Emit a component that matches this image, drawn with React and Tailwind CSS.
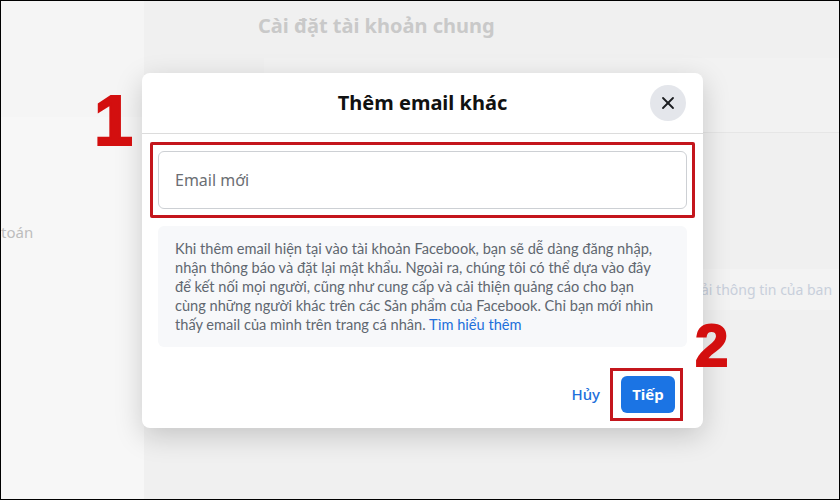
import { X } from 'lucide-react';

const bodyFont = { fontFamily: '"Noto Sans", "Open Sans", sans-serif' };
const markFont = { fontFamily: '"Liberation Sans", Arial, sans-serif' };

export default function App() {
  return (
    <div className="relative h-[500px] w-[840px] overflow-hidden border border-black bg-[#f0f0f0]" style={bodyFont}>
      {/* faded page behind the dialog */}
      <div className="flex h-full">
        <aside className="flex w-[143px] shrink-0 flex-col bg-[#f7f7f7]">
          <div className="h-[116px] bg-[#f5f5f5]" />
          <div className="mt-[104px] text-[15px] text-[#bdbdbd]">toán</div>
        </aside>
        <main className="flex flex-1 flex-col">
          <div className="h-[57px] pl-[114px] pt-[10px] text-[20px] font-bold text-[#c9c9c9]">
            Cài đặt tài khoản chung
          </div>
          <div className="ml-[120px] h-[75px] border-b border-[#e6e6e6] bg-[#f2f2f2]" />
          <div className="ml-auto mt-[136px] w-[140px] truncate bg-[#f3f3f3] py-[10px] pl-[2px] text-[14px] text-[#c8cfdb]">
            ải thông tin của ban
          </div>
        </main>
      </div>

      {/* dialog */}
      <div className="absolute left-[141px] top-[72px] flex h-[355px] w-[561px] flex-col rounded-lg bg-white shadow-[0_8px_28px_rgba(0,0,0,0.18)]">
        <div className="relative flex h-[61px] shrink-0 items-center justify-center border-b border-[#dcdcdc]">
          <h2 className="text-[20px] font-bold text-[#111]">Thêm email khác</h2>
          <button
            type="button"
            className="absolute right-[17px] top-[12px] flex h-[36px] w-[36px] items-center justify-center rounded-full bg-[#e4e6eb] text-[#1c1e21]"
          >
            <X size={20} strokeWidth={2.2} />
          </button>
        </div>

        <div className="px-[8px] pt-[8px]">
          <div className="rounded-[2px] border-[3px] border-[#c4161c] px-[5px] py-[6px]">
            <div className="flex h-[58px] items-center rounded-md border border-[#cdd0d4] px-[16px] text-[16px] text-[#6b6e73]">
              Email mới
            </div>
          </div>
        </div>

        <div
          className="mx-[16px] mt-[8px] whitespace-nowrap rounded-md bg-[#f7f8fa] px-[17px] py-[13px] text-[14.6px] leading-[19px] text-[#606770]"
          style={{ fontFamily: 'Lato, "Noto Sans", sans-serif' }}
        >
          Khi thêm email hiện tại vào tài khoản Facebook, bạn sẽ dễ dàng đăng nhập,
          <br />
          nhận thông báo và đặt lại mật khẩu. Ngoài ra, chúng tôi có thể dựa vào đây
          <br />
          để kết nối mọi người, cũng như cung cấp và cải thiện quảng cáo cho bạn
          <br />
          cùng những người khác trên các Sản phẩm của Facebook. Chỉ bạn mới nhìn
          <br />
          thấy email của mình trên trang cá nhân. <span className="text-[#216fdb]">Tìm hiểu thêm</span>
        </div>

        <div className="mt-auto flex items-center justify-end gap-[10px] pb-[7px] pr-[20px]">
          <button type="button" className="text-[15px] font-medium text-[#216fdb]">Hủy</button>
          <div className="border-[3px] border-[#c4161c] py-[5px] pl-[8px] pr-[5px]">
            <button
              type="button"
              className="flex h-[37px] w-[54px] items-center justify-center rounded-md bg-[#1b74e4] text-[15px] font-bold text-white"
            >
              Tiếp
            </button>
          </div>
        </div>
      </div>

      {/* step annotations */}
      <div
        className="absolute left-[93px] top-[85px] text-[70px] font-bold leading-none text-[#d30f0f] [-webkit-text-stroke:2px_#d30f0f]"
        style={markFont}
      >
        1
      </div>
      <div
        className="absolute left-[694px] top-[315px] text-[60px] font-bold leading-none text-[#d30f0f] [-webkit-text-stroke:2px_#d30f0f]"
        style={markFont}
      >
        2
      </div>
    </div>
  );
}
